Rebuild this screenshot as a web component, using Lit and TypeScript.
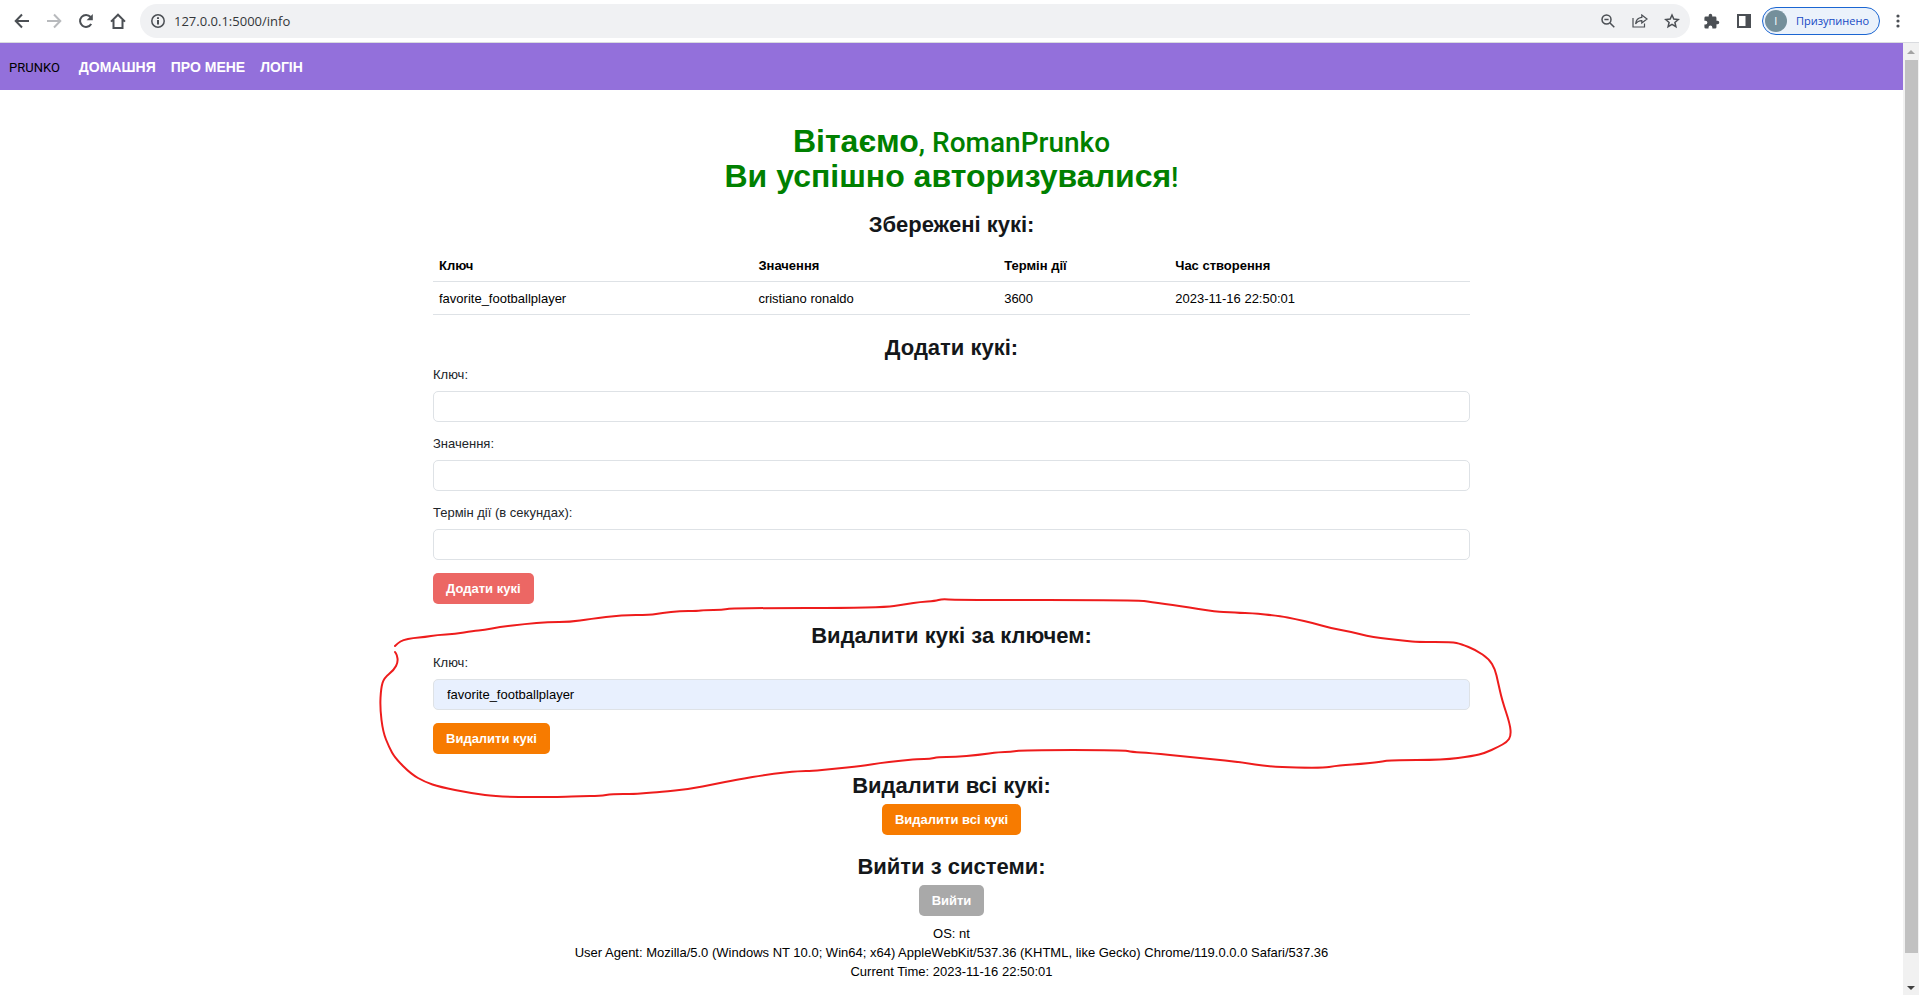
import { LitElement, html, css, svg } from "lit";
import { customElement, property } from "lit/decorators.js";

type Point = [number, number];

/* Joins the points with quadratic curves through their midpoints. */
function smoothPath(points: Point[]): string {
  let d = `M${points[0][0]} ${points[0][1]}`;
  for (let i = 1; i < points.length - 1; i++) {
    const [x, y] = points[i];
    const [nx, ny] = points[i + 1];
    d += `Q${x} ${y} ${(x + nx) / 2} ${(y + ny) / 2}`;
  }
  const last = points[points.length - 1];
  return `${d}L${last[0]} ${last[1]}`;
}

const MARKER: Point[] = [
  [395, 646], [398, 643], [403, 640], [413, 638], [425, 637], [437, 635], [455, 634],
  [473, 631], [484, 630], [500, 627], [525, 624], [548, 622], [570, 622], [590, 619],
  [622, 615], [650, 615], [662, 613], [680, 611], [697, 611], [705, 610], [722, 610],
  [733, 608], [881, 608], [907, 604], [920, 602], [935, 601], [942, 599], [955, 600],
  [1138, 600], [1150, 602], [1180, 606], [1217, 612], [1230, 612], [1240, 613],
  [1250, 613], [1280, 616], [1295, 619], [1313, 623], [1330, 628], [1352, 632],
  [1367, 636], [1380, 638], [1398, 640], [1407, 641], [1417, 642], [1452, 642],
  [1461, 644], [1476, 650], [1489, 659], [1495, 669], [1498, 682], [1502, 700],
  [1510, 724], [1511, 736], [1507, 742], [1498, 747], [1485, 753], [1473, 756],
  [1443, 760], [1390, 760], [1380, 762], [1360, 764], [1345, 765], [1335, 766],
  [1323, 768], [1270, 767], [1240, 762], [1210, 759], [1190, 757], [1150, 753],
  [1132, 752], [1123, 750], [1023, 750], [1010, 752], [1000, 752], [978, 755],
  [955, 757], [938, 757], [930, 759], [918, 759], [898, 761], [880, 763], [862, 766],
  [832, 769], [812, 771], [800, 771], [770, 774], [735, 780], [715, 784], [690, 789],
  [660, 792], [646, 793], [635, 794], [612, 794], [600, 796], [580, 796], [563, 797],
  [500, 797], [470, 793], [440, 787], [425, 782], [411, 774], [395, 758], [389, 747],
  [383, 732], [380, 708], [381, 688], [384, 678], [394, 670], [398, 662], [397, 655],
  [395, 652],
];

@customElement("browser-toolbar")
class BrowserToolbar extends LitElement {
  static styles = css`
    :host {
      display: flex;
      align-items: center;
      box-sizing: border-box;
      height: 43px;
      padding: 0 5px 0 6px;
      background: #fff;
      border-bottom: 1px solid #d9dbdf;
      font-family: "Open Sans", "Noto Sans", sans-serif;
      color: #202124;
    }
    button {
      display: flex;
      align-items: center;
      justify-content: center;
      flex: none;
      width: 32px;
      height: 32px;
      padding: 0;
      border: 0;
      background: none;
      color: #4b4f54;
    }
    svg {
      display: block;
      fill: none;
      stroke: currentColor;
      stroke-width: 2;
    }
    .faded {
      color: #b8babd;
    }
    .solid {
      fill: currentColor;
      stroke: none;
    }
    .thin {
      stroke-width: 1.5;
    }
    .fine {
      stroke-width: 1.2;
    }
    .omnibox {
      display: flex;
      align-items: center;
      flex: 1;
      height: 34px;
      margin: 0 6px;
      padding: 0 2px;
      border-radius: 17px;
      background: #f0f1f3;
    }
    .address {
      display: flex;
      flex: 1;
    }
    .address input {
      width: 100%;
      padding: 0;
      border: 0;
      outline: 0;
      background: none;
      color: #33363a;
      font: 13px/20px "Open Sans", "Noto Sans", sans-serif;
    }
    .chip {
      width: auto;
      height: 28px;
      margin: 0 2px;
      padding: 0 10px 0 2px;
      gap: 9px;
      border: 1px solid #1b66d2;
      border-radius: 14px;
      background: #ebf2fb;
      color: #1349c4;
      font: 11px/16px "Open Sans", "Noto Sans", sans-serif;
    }
    .avatar {
      width: 22px;
      height: 22px;
      border-radius: 11px;
      background: #748f9b;
      color: #fff;
      line-height: 22px;
      text-align: center;
    }
  `;

  render() {
    return html`
      <button aria-label="Назад">
        <svg width="16" height="16" viewBox="0 0 16 16"><path d="M15 8H2M8 1.5 1.7 8 8 14.5" /></svg>
      </button>
      <button class="faded" aria-label="Вперед">
        <svg width="16" height="16" viewBox="0 0 16 16"><path d="M1 8h13M8 1.5 14.3 8 8 14.5" /></svg>
      </button>
      <button aria-label="Оновити">
        <svg width="16" height="16" viewBox="0 0 16 16">
          <path d="M13.2 11A6 6 0 1 1 12.6 4" /><path class="solid" d="M14.8 1v6.2H8.6z" />
        </svg>
      </button>
      <button aria-label="Домашня сторінка">
        <svg width="16" height="16" viewBox="0 0 16 16"><path d="M1 8.6 8 1.7l7 6.9M3.5 7v8h9V7" /></svg>
      </button>
      <div class="omnibox">
        <button aria-label="Інформація про сайт">
          <svg width="14" height="14" viewBox="0 0 14 14">
            <circle class="thin" cx="7" cy="7" r="6.2" /><path d="M7 6v4.5M7 3.2v1.7" />
          </svg>
        </button>
        <div class="address"><input aria-label="Адреса" value="127.0.0.1:5000/info" /></div>
        <button aria-label="Масштаб">
          <svg class="thin" width="14" height="14" viewBox="0 0 14 14">
            <circle cx="5.5" cy="5.5" r="4.5" /><path d="m9 9 4.3 4.3M3.4 5.5h4.2" />
          </svg>
        </button>
        <button aria-label="Поділитися">
          <svg class="fine" width="16" height="14" viewBox="0 0 16 14">
            <path d="M1 4v9h11.500V9.500" />
            <path d="M9.800 1 15 5l-5.200 4V6.600C6.800 6.600 5 7.800 3.600 10 4 6 6 3.800 9.800 3.400z" />
          </svg>
        </button>
        <button aria-label="Додати закладку">
          <svg class="thin" width="16" height="16" viewBox="0 0 16 16">
            <path d="m8 2 1.800 4.100 4.400.400-3.300 2.900 1 4.300L8 11.400l-3.900 2.300 1-4.300-3.300-2.900 4.400-.4z" />
          </svg>
        </button>
      </div>
      <button aria-label="Розширення">
        <svg class="solid" width="17" height="17" viewBox="0 0 24 24">
          <path d="M20.500 11H19V7a2 2 0 0 0-2-2h-4V3.500a2.500 2.500 0 0 0-5 0V5H4a2 2 0 0 0-2 2v3.800h1.500a2.700 2.700 0 0 1 0 5.400H2V20a2 2 0 0 0 2 2h3.800v-1.500a2.700 2.700 0 0 1 5.400 0V22H17a2 2 0 0 0 2-2v-4h1.500a2.500 2.500 0 0 0 0-5z" />
        </svg>
      </button>
      <button aria-label="Бічна панель">
        <svg class="solid" width="14" height="14" viewBox="0 0 14 14">
          <path fill-rule="evenodd" d="M0 0h14v14H0zM2 2v10h6.500V2z" />
        </svg>
      </button>
      <button class="chip"><span class="avatar">I</span>Призупинено</button>
      <button aria-label="Меню">
        <svg class="solid" width="4" height="14" viewBox="0 0 4 14">
          <circle cx="2" cy="2" r="1.600" /><circle cx="2" cy="7" r="1.600" /><circle cx="2" cy="12" r="1.600" />
        </svg>
      </button>
    `;
  }
}

@customElement("text-field")
class TextField extends LitElement {
  @property() label = "";
  @property() value = "";
  @property({ type: Boolean, reflect: true }) filled = false;

  static styles = css`
    :host {
      display: block;
      font: 13px/19px "Liberation Sans", Arial, sans-serif;
      color: #212529;
    }
    label {
      display: block;
      margin-bottom: 7px;
    }
    input {
      display: block;
      box-sizing: border-box;
      width: 100%;
      height: 31px;
      padding: 0 13px;
      border: 1px solid #dee2e6;
      border-radius: 5px;
      background: #fff;
      color: #000;
      font: inherit;
    }
    :host([filled]) input {
      background: #e8f0fe;
    }
  `;

  render() {
    return html`
      <label for="field">${this.label}</label>
      <input id="field" type="text" .value=${this.value} />
    `;
  }
}

@customElement("app-root")
class AppRoot extends LitElement {
  static styles = css`
    :host {
      display: flex;
      flex-direction: column;
      min-height: 100vh;
      background: #fff;
      color: #000;
      font: 13px/19px "Liberation Sans", Arial, sans-serif;
    }
    .window {
      display: flex;
      flex: 1;
    }
    .page {
      flex: 1;
      min-width: 0;
    }
    nav {
      display: flex;
      align-items: center;
      box-sizing: border-box;
      height: 47px;
      padding: 2px 9px 0;
      gap: 15px;
      background: #9370db;
    }
    nav a {
      color: #fff;
      font-size: 14px;
      font-weight: 700;
      text-decoration: none;
    }
    nav .brand {
      margin-right: 4px;
      color: #000;
      font-family: Roboto, "Liberation Sans", sans-serif;
      font-size: 13px;
      font-weight: 400;
    }
    main {
      max-width: 1037px;
      margin: 0 auto;
      padding: 34px 0 14px;
    }
    h1,
    h2 {
      margin: 0;
      text-align: center;
      font-weight: 700;
    }
    h1 {
      margin-bottom: 18px;
      color: #008000;
      font-size: 32px;
      line-height: 35px;
    }
    .name {
      font-family: Roboto, "Liberation Sans", sans-serif;
      font-size: 28px;
      font-weight: 500;
      line-height: 28px;
    }
    h2 {
      color: #14171a;
      font-size: 22px;
      line-height: 25px;
    }
    table {
      width: 100%;
      margin: 12px 0 20px;
      border-collapse: collapse;
      table-layout: fixed;
    }
    th,
    td {
      padding: 7px 6px 6px;
      border-bottom: 1px solid #dee2e6;
      text-align: left;
    }
    .key {
      width: 30.8%;
    }
    .value {
      width: 23.7%;
    }
    .term {
      width: 16.5%;
    }
    form {
      position: relative;
      display: flex;
      flex-direction: column;
      align-items: flex-start;
      gap: 12px;
      margin: 5px 0 19px;
    }
    text-field {
      width: 100%;
    }
    .action {
      align-items: center;
      margin-top: 6px;
    }
    button {
      height: 31px;
      padding: 0 13px;
      border: 0;
      border-radius: 5px;
      color: #fff;
      font: 700 13px/19px "Liberation Sans", Arial, sans-serif;
    }
    text-field + button {
      margin-top: 1px;
    }
    .add {
      background: #ec6764;
    }
    .delete {
      background: #f77b00;
    }
    .exit {
      background: #a9a9a9;
    }
    .marker {
      position: absolute;
      left: 50%;
      top: -63px;
      width: 1150px;
      height: 220px;
      margin-left: -582px;
      fill: none;
      stroke: #ee1c1c;
      stroke-width: 2;
      stroke-linecap: round;
      pointer-events: none;
    }
    footer {
      margin-top: -11px;
      text-align: center;
    }
    p {
      margin: 0;
    }
    .scrollbar {
      display: flex;
      flex-direction: column;
      align-items: center;
      width: 16px;
      background: #f1f1f1;
    }
    .scrollbar svg {
      display: block;
      flex: none;
    }
    .thumb {
      flex: 893;
      width: 13px;
      background: #c1c1c1;
    }
    .track {
      flex: 25;
    }
  `;

  render() {
    return html`
      <browser-toolbar></browser-toolbar>
      <div class="window">
        <div class="page">
          <nav>
            <a class="brand" href="#">PRUNKO</a>
            <a href="#home">ДОМАШНЯ</a>
            <a href="#about">ПРО МЕНЕ</a>
            <a href="#login">ЛОГІН</a>
          </nav>
          <main>
            <h1>Вітаємо<span class="name">, RomanPrunko</span><br />Ви успішно авторизувалися<span class="name">!</span></h1>
            <h2>Збережені кукі:</h2>
            <table>
              <colgroup>
                <col class="key" />
                <col class="value" />
                <col class="term" />
                <col />
              </colgroup>
              <thead>
                <tr>
                  <th>Ключ</th>
                  <th>Значення</th>
                  <th>Термін дії</th>
                  <th>Час створення</th>
                </tr>
              </thead>
              <tbody>
                <tr>
                  <td>favorite_footballplayer</td>
                  <td>cristiano ronaldo</td>
                  <td>3600</td>
                  <td>2023-11-16 22:50:01</td>
                </tr>
              </tbody>
            </table>
            <h2>Додати кукі:</h2>
            <form>
              <text-field label="Ключ:"></text-field>
              <text-field label="Значення:"></text-field>
              <text-field label="Термін дії (в секундах):"></text-field>
              <button type="button" class="add">Додати кукі</button>
            </form>
            <h2>Видалити кукі за ключем:</h2>
            <form>
              <text-field label="Ключ:" value="favorite_footballplayer" filled></text-field>
              <button type="button" class="delete">Видалити кукі</button>
              <svg class="marker" viewBox="370 590 1150 220" aria-hidden="true">
                ${svg`<path d=${smoothPath(MARKER)} />`}
              </svg>
            </form>
            <h2>Видалити всі кукі:</h2>
            <form class="action">
              <button type="button" class="delete">Видалити всі кукі</button>
            </form>
            <h2>Вийти з системи:</h2>
            <form class="action">
              <button type="button" class="exit">Вийти</button>
            </form>
            <footer>
              <p>OS: nt</p>
              <p>User Agent: Mozilla/5.0 (Windows NT 10.0; Win64; x64) AppleWebKit/537.36 (KHTML, like Gecko) Chrome/119.0.0.0 Safari/537.36</p>
              <p>Current Time: 2023-11-16 22:50:01</p>
            </footer>
          </main>
        </div>
        <div class="scrollbar" aria-hidden="true">
          <svg width="16" height="17" viewBox="0 0 16 17"><path fill="#a3a3a3" d="m8 7 4 4H4z" /></svg>
          <div class="thumb"></div>
          <div class="track"></div>
          <svg width="16" height="17" viewBox="0 0 16 17"><path fill="#404040" d="m8 12 4-4H4z" /></svg>
        </div>
      </div>
    `;
  }
}
